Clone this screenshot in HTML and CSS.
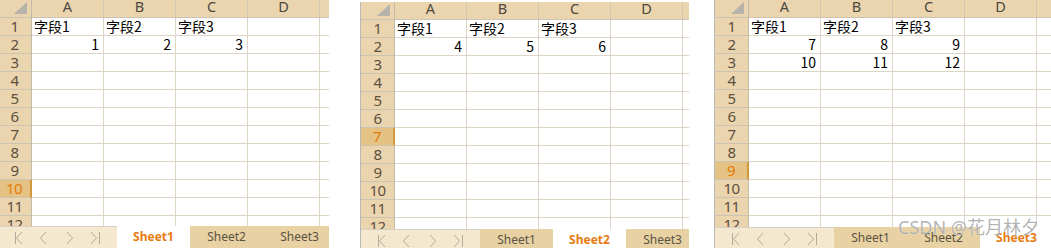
FILE: index.html
```html
<!DOCTYPE html>
<html lang="zh-CN">
<head>
    <meta charset="UTF-8">
    <link rel="stylesheet" href="styles.css">
    <title>Sheets</title>
</head>
<body>
<div class="page">
    <!-- book one: Sheet1 -->
    <div class="book book-one">
        <div class="sheet">
            <div class="row head"><div class="corner"><span class="tri"></span></div><div class="ch">A</div><div class="ch">B</div><div class="ch">C</div><div class="ch">D</div><div class="ch">E</div></div>
            <div class="row"><div class="rh">1</div><div class="c">字段1</div><div class="c">字段2</div><div class="c">字段3</div><div class="c"></div><div class="c"></div></div>
            <div class="row"><div class="rh">2</div><div class="c num">1</div><div class="c num">2</div><div class="c num">3</div><div class="c"></div><div class="c"></div></div>
            <div class="row"><div class="rh">3</div><div class="c"></div><div class="c"></div><div class="c"></div><div class="c"></div><div class="c"></div></div>
            <div class="row"><div class="rh">4</div><div class="c"></div><div class="c"></div><div class="c"></div><div class="c"></div><div class="c"></div></div>
            <div class="row"><div class="rh">5</div><div class="c"></div><div class="c"></div><div class="c"></div><div class="c"></div><div class="c"></div></div>
            <div class="row"><div class="rh">6</div><div class="c"></div><div class="c"></div><div class="c"></div><div class="c"></div><div class="c"></div></div>
            <div class="row"><div class="rh">7</div><div class="c"></div><div class="c"></div><div class="c"></div><div class="c"></div><div class="c"></div></div>
            <div class="row"><div class="rh">8</div><div class="c"></div><div class="c"></div><div class="c"></div><div class="c"></div><div class="c"></div></div>
            <div class="row"><div class="rh">9</div><div class="c"></div><div class="c"></div><div class="c"></div><div class="c"></div><div class="c"></div></div>
            <div class="row"><div class="rh rh-on">10</div><div class="c"></div><div class="c"></div><div class="c"></div><div class="c"></div><div class="c"></div></div>
            <div class="row"><div class="rh">11</div><div class="c"></div><div class="c"></div><div class="c"></div><div class="c"></div><div class="c"></div></div>
            <div class="row"><div class="rh">12</div><div class="c"></div><div class="c"></div><div class="c"></div><div class="c"></div><div class="c"></div></div>
        </div>
        <div class="tabs">
            <div class="nav">
                <svg width="119" height="22" viewBox="0 0 119 22"><g fill="none" stroke="#b3aa9b" stroke-width="1"><path d="M17.5 6v12M24 6l-5.5 6 5.5 6"/><path d="M48 6l-5.5 6 5.5 6"/><path d="M69 6l5.5 6-5.5 6"/><path d="M93 6l5.5 6-5.5 6M101.5 6v12"/></g></svg>
            </div>
            <div class="tab tab-on">Sheet1</div>
            <div class="tab">Sheet2</div>
            <div class="tab">Sheet3</div>
        </div>
    </div>

    <!-- book two: Sheet2 -->
    <div class="book book-two">
        <div class="sheet">
            <div class="row head"><div class="corner"><span class="tri"></span></div><div class="ch">A</div><div class="ch">B</div><div class="ch">C</div><div class="ch">D</div><div class="ch">E</div></div>
            <div class="row"><div class="rh">1</div><div class="c">字段1</div><div class="c">字段2</div><div class="c">字段3</div><div class="c"></div><div class="c"></div></div>
            <div class="row"><div class="rh">2</div><div class="c num">4</div><div class="c num">5</div><div class="c num">6</div><div class="c"></div><div class="c"></div></div>
            <div class="row"><div class="rh">3</div><div class="c"></div><div class="c"></div><div class="c"></div><div class="c"></div><div class="c"></div></div>
            <div class="row"><div class="rh">4</div><div class="c"></div><div class="c"></div><div class="c"></div><div class="c"></div><div class="c"></div></div>
            <div class="row"><div class="rh">5</div><div class="c"></div><div class="c"></div><div class="c"></div><div class="c"></div><div class="c"></div></div>
            <div class="row"><div class="rh">6</div><div class="c"></div><div class="c"></div><div class="c"></div><div class="c"></div><div class="c"></div></div>
            <div class="row"><div class="rh rh-on">7</div><div class="c"></div><div class="c"></div><div class="c"></div><div class="c"></div><div class="c"></div></div>
            <div class="row"><div class="rh">8</div><div class="c"></div><div class="c"></div><div class="c"></div><div class="c"></div><div class="c"></div></div>
            <div class="row"><div class="rh">9</div><div class="c"></div><div class="c"></div><div class="c"></div><div class="c"></div><div class="c"></div></div>
            <div class="row"><div class="rh">10</div><div class="c"></div><div class="c"></div><div class="c"></div><div class="c"></div><div class="c"></div></div>
            <div class="row"><div class="rh">11</div><div class="c"></div><div class="c"></div><div class="c"></div><div class="c"></div><div class="c"></div></div>
            <div class="row"><div class="rh">12</div><div class="c"></div><div class="c"></div><div class="c"></div><div class="c"></div><div class="c"></div></div>
        </div>
        <div class="tabs">
            <div class="nav">
                <svg width="119" height="22" viewBox="0 0 119 22"><g fill="none" stroke="#b3aa9b" stroke-width="1"><path d="M17.5 6v12M24 6l-5.5 6 5.5 6"/><path d="M48 6l-5.5 6 5.5 6"/><path d="M69 6l5.5 6-5.5 6"/><path d="M93 6l5.5 6-5.5 6M101.5 6v12"/></g></svg>
            </div>
            <div class="tab">Sheet1</div>
            <div class="tab tab-on">Sheet2</div>
            <div class="tab">Sheet3</div>
        </div>
    </div>

    <!-- book three: Sheet3 -->
    <div class="book book-three">
        <div class="sheet">
            <div class="row head"><div class="corner"><span class="tri"></span></div><div class="ch">A</div><div class="ch">B</div><div class="ch">C</div><div class="ch">D</div><div class="ch">E</div></div>
            <div class="row"><div class="rh">1</div><div class="c">字段1</div><div class="c">字段2</div><div class="c">字段3</div><div class="c"></div><div class="c"></div></div>
            <div class="row"><div class="rh">2</div><div class="c num">7</div><div class="c num">8</div><div class="c num">9</div><div class="c"></div><div class="c"></div></div>
            <div class="row"><div class="rh">3</div><div class="c num">10</div><div class="c num">11</div><div class="c num">12</div><div class="c"></div><div class="c"></div></div>
            <div class="row"><div class="rh">4</div><div class="c"></div><div class="c"></div><div class="c"></div><div class="c"></div><div class="c"></div></div>
            <div class="row"><div class="rh">5</div><div class="c"></div><div class="c"></div><div class="c"></div><div class="c"></div><div class="c"></div></div>
            <div class="row"><div class="rh">6</div><div class="c"></div><div class="c"></div><div class="c"></div><div class="c"></div><div class="c"></div></div>
            <div class="row"><div class="rh">7</div><div class="c"></div><div class="c"></div><div class="c"></div><div class="c"></div><div class="c"></div></div>
            <div class="row"><div class="rh">8</div><div class="c"></div><div class="c"></div><div class="c"></div><div class="c"></div><div class="c"></div></div>
            <div class="row"><div class="rh rh-on">9</div><div class="c"></div><div class="c"></div><div class="c"></div><div class="c"></div><div class="c"></div></div>
            <div class="row"><div class="rh">10</div><div class="c"></div><div class="c"></div><div class="c"></div><div class="c"></div><div class="c"></div></div>
            <div class="row"><div class="rh">11</div><div class="c"></div><div class="c"></div><div class="c"></div><div class="c"></div><div class="c"></div></div>
            <div class="row"><div class="rh">12</div><div class="c"></div><div class="c"></div><div class="c"></div><div class="c"></div><div class="c"></div></div>
        </div>
        <div class="tabs">
            <div class="nav">
                <svg width="119" height="22" viewBox="0 0 119 22"><g fill="none" stroke="#b3aa9b" stroke-width="1"><path d="M17.5 6v12M24 6l-5.5 6 5.5 6"/><path d="M48 6l-5.5 6 5.5 6"/><path d="M69 6l5.5 6-5.5 6"/><path d="M93 6l5.5 6-5.5 6M101.5 6v12"/></g></svg>
            </div>
            <div class="tab">Sheet1</div>
            <div class="tab">Sheet2</div>
            <div class="tab tab-on">Sheet3</div>
        </div>
        <div class="mark">CSDN @花月林夕</div>
    </div>
</div>
</body>
</html>
```

FILE: styles.css
```css
*{
    margin: 0;
    padding: 0;
    box-sizing: border-box;
}
body{
    width: 1051px;
    height: 248px;
    overflow: hidden;
    background: #fff;
    font-family: "Noto Sans", sans-serif;
}
.page{
    display: flex;
    align-items: flex-start;
    height: 248px;
    overflow: hidden;
}
.book{
    position: relative;
    display: flex;
    flex-direction: column;
    flex-shrink: 0;
    height: 252px;
    overflow: hidden;
    border-left: 1px solid #b9b9b9;
}
.book-one{
    width: 332px;
    margin-left: -3px;
    margin-right: 31px;
}
.book-two{
    width: 329px;
    margin-top: 2px;
    margin-right: 25px;
}
.book-three{
    width: 340px;
}
.sheet{
    height: 226px;
    overflow: hidden;
    flex-shrink: 0;
}
.book-two .sheet,
.book-three .sheet{
    height: 227px;
}
.row{
    display: flex;
    height: 18px;
}
.corner,
.rh{
    width: 34px;
    flex-shrink: 0;
    background: #ead5ae;
    border-right: 1px solid #c2b9aa;
    border-bottom: 1px solid #cdc3b2;
}
.corner{
    position: relative;
}
.tri{
    position: absolute;
    right: 4px;
    bottom: 3px;
    width: 0;
    height: 0;
    border-left: 13px solid transparent;
    border-bottom: 12px solid #b7b2aa;
}
.ch{
    width: 72px;
    flex-shrink: 0;
    background: #ead5ae;
    border-right: 1px solid #d2c6b2;
    border-bottom: 1px solid #cdc3b2;
    text-align: center;
    font-size: 14.5px;
    line-height: 13px;
    color: #4c4840;
}
.rh{
    text-align: center;
    font-size: 15px;
    line-height: 17px;
    letter-spacing: -0.5px;
    color: #5d5040;
}
.rh-on{
    background: #e4c283;
    color: #e47a0a;
    border-right: 2px solid #d0983a;
}
.c{
    width: 72px;
    flex-shrink: 0;
    border-right: 1px solid #ddd5c8;
    border-bottom: 1px solid #ddd5c8;
    padding: 0 4px 0 2px;
    font-family: "Noto Sans CJK SC", sans-serif;
    font-size: 14px;
    line-height: 17px;
    color: #000;
    white-space: nowrap;
    overflow: hidden;
}
.num{
    text-align: right;
}
.tabs{
    display: flex;
    height: 22px;
    flex-shrink: 0;
}
.nav{
    width: 119px;
    flex-shrink: 0;
    background: #f4e9cf;
    border-top: 1px solid #d6d0c6;
}
.nav svg{
    display: block;
    margin-top: -1px;
}
.tab{
    width: 73px;
    flex-shrink: 0;
    background: #e8d2a3;
    text-align: center;
    font-size: 12px;
    line-height: 22px;
    color: #5b5244;
}
.tab-on{
    background: #fff;
    color: #e77b10;
    font-weight: bold;
}
.mark{
    position: absolute;
    left: 183px;
    top: 216px;
    font-size: 18px;
    line-height: 22px;
    color: rgba(115, 115, 115, 0.55);
    text-shadow: 0 0 1px #fff;
    font-family: "Noto Sans", "Noto Sans CJK SC", sans-serif;
    white-space: nowrap;
}
```
